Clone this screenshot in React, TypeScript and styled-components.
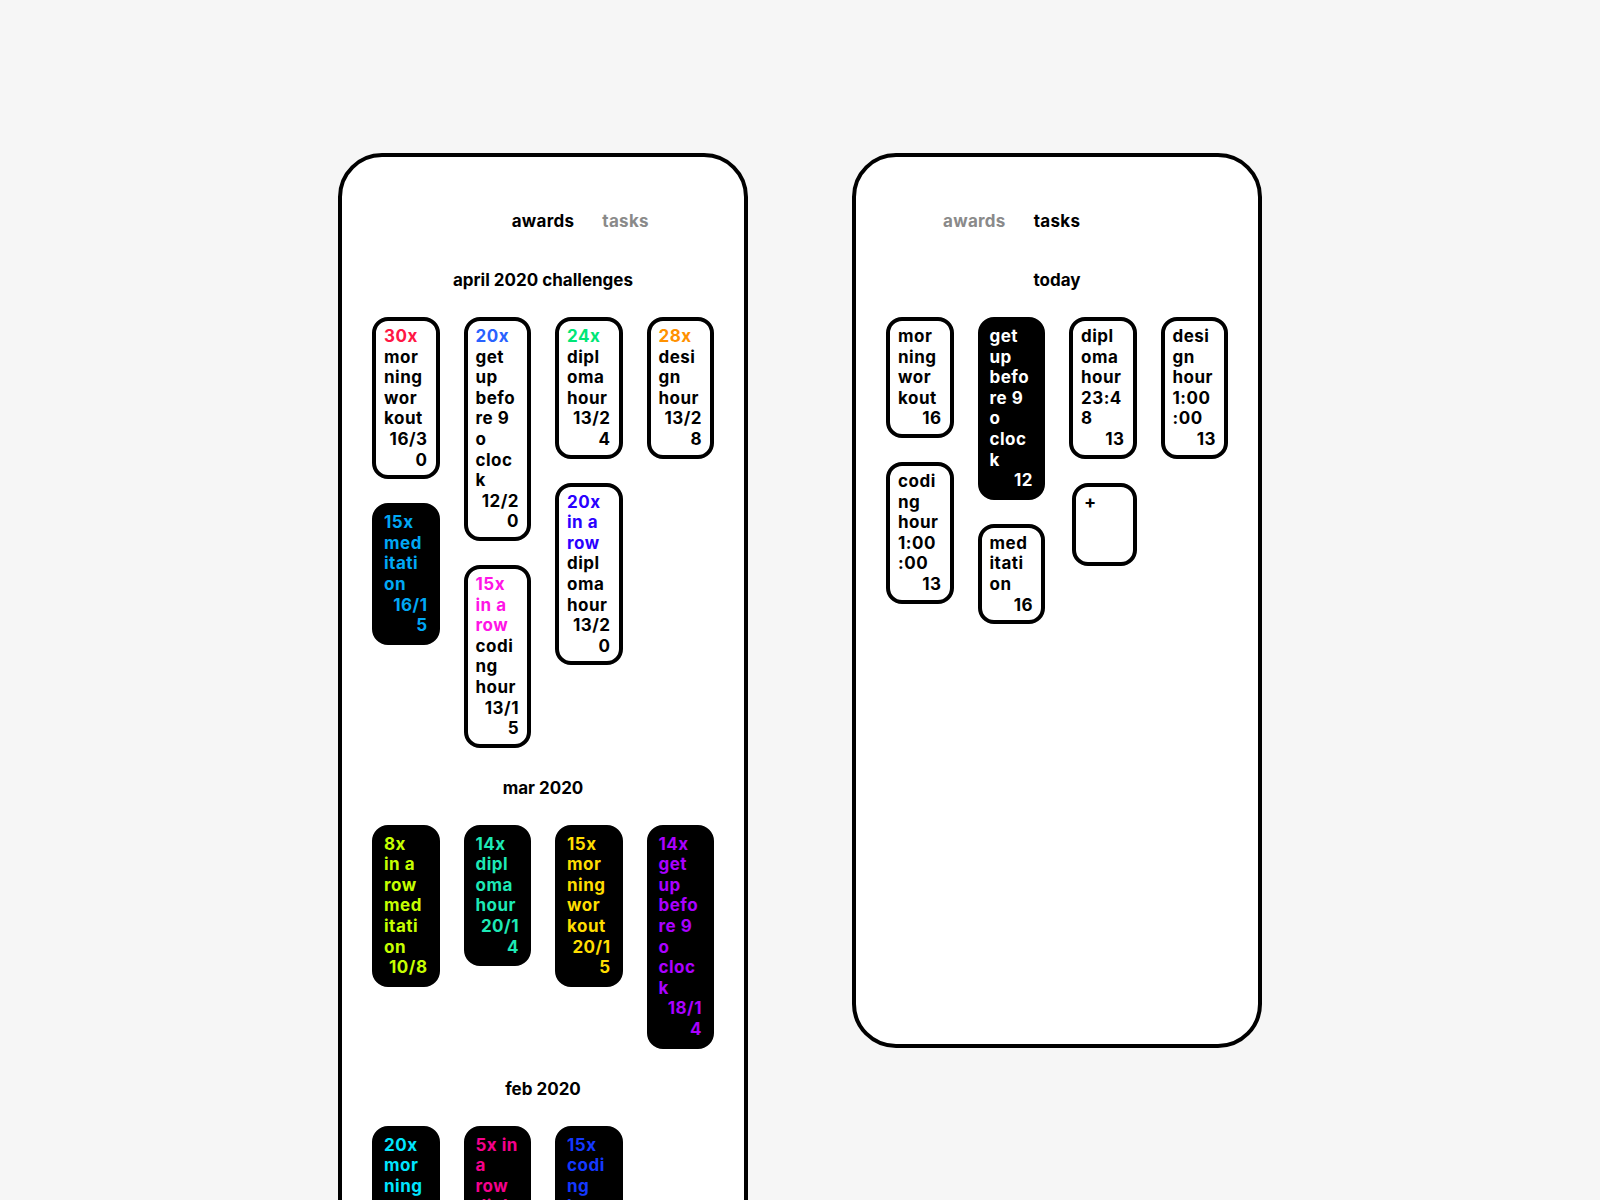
import React from 'react';
import styled, { createGlobalStyle, css } from 'styled-components';

const Global = createGlobalStyle`
  html, body { margin: 0; padding: 0; background: #f6f6f6; }
  body { font-family: Inter, "Noto Sans", "Liberation Sans", sans-serif; overflow: hidden; }
  #root { height: 1200px; }
`;

const Stage = styled.main`
  box-sizing: border-box;
  height: 1200px;
  overflow: hidden;
  display: flex;
  justify-content: center;
  align-items: flex-start;
  gap: 104px;
  padding-top: 153px;
`;

const Phone = styled.section<{ $fixed?: boolean }>`
  box-sizing: border-box;
  width: 410px;
  min-height: 895px;
  ${(p) => p.$fixed && css`height: 895px;`}
  background: #fff;
  border: 4px solid #000;
  border-radius: 44px;
  padding: 53px 30px 40px;
  display: flex;
  flex-direction: column;
  color: #000;
  font-weight: 650;
  font-size: 17px;
`;

const Tabs = styled.nav`
  display: grid;
  grid-template-columns: 1fr auto 1fr;
  column-gap: 28px;
  line-height: 22px;
  letter-spacing: 0.3px;
  margin-bottom: 37px;
`;

const Tab = styled.span<{ $active?: boolean; $align?: 'start' | 'end' }>`
  color: ${(p) => (p.$active ? '#000' : '#8a8a8a')};
  justify-self: ${(p) => p.$align ?? 'center'};
`;

const Section = styled.div`
  & + & { margin-top: 29px; }
`;

const SectionTitle = styled.h2`
  margin: 0 0 26px;
  text-align: center;
  font-size: 17px;
  font-weight: 650;
  line-height: 22px;
  letter-spacing: 0;
`;

const Board = styled.div`
  display: grid;
  grid-template-columns: repeat(4, minmax(0, 1fr));
  column-gap: 24px;
  align-items: start;
`;

const Column = styled.div`
  display: flex;
  flex-direction: column;
  gap: 24px;
  min-width: 0;
`;

const Card = styled.div<{ $dark?: boolean; $ink?: string }>`
  box-sizing: border-box;
  border: 4px solid #000;
  border-radius: 16px;
  padding: 5px 8px;
  background: ${(p) => (p.$dark ? '#000' : '#fff')};
  color: ${(p) => (p.$dark ? p.$ink ?? '#fff' : '#000')};
  line-height: 20.6px;
  letter-spacing: 0.5px;
  white-space: pre;
`;

const AddCard = styled(Card)`
  min-height: 83px;
  margin-left: 3px;
  font-size: 18px;
  font-weight: 700;
  cursor: pointer;
`;

const Award = styled.span<{ $color: string }>`
  display: block;
  color: ${(p) => p.$color};
`;

const Name = styled.span`
  display: block;
`;

const Count = styled.span`
  display: block;
  text-align: right;
`;

type Item = {
  award?: string;
  color?: string;
  name: string;
  count: string;
  dark?: boolean;
};

const april: Item[] = [
  { award: '30x', color: '#ff1744', name: 'mor\nning\nwor\nkout', count: '16/3\n0' },
  { award: '20x', color: '#2962ff', name: 'get\nup\nbefo\nre 9\no\ncloc\nk', count: '12/2\n0' },
  { award: '24x', color: '#00e676', name: 'dipl\noma\nhour', count: '13/2\n4' },
  { award: '28x', color: '#ff9100', name: 'desi\ngn\nhour', count: '13/2\n8' },
  { award: '15x', color: '#00a8f5', name: 'med\nitati\non', count: '16/1\n5', dark: true },
  { award: '15x\nin a\nrow', color: '#ff14e6', name: 'codi\nng\nhour', count: '13/1\n5' },
  { award: '20x\nin a\nrow', color: '#2a00ff', name: 'dipl\noma\nhour', count: '13/2\n0' },
];

const march: Item[] = [
  { award: '8x', color: '#c6ff00', name: 'in a\nrow\nmed\nitati\non', count: '10/8', dark: true },
  { award: '14x', color: '#1de9b6', name: 'dipl\noma\nhour', count: '20/1\n4', dark: true },
  { award: '15x', color: '#ffdd00', name: 'mor\nning\nwor\nkout', count: '20/1\n5', dark: true },
  { award: '14x', color: '#aa00ff', name: 'get\nup\nbefo\nre 9\no\ncloc\nk', count: '18/1\n4', dark: true },
];

const february: Item[] = [
  { award: '20x', color: '#00e5ff', name: 'mor\nning\nwor\nkout', count: '20/2\n0', dark: true },
  { award: '5x in\na\nrow', color: '#f5008c', name: 'dipl\noma\nhour', count: '5/5', dark: true },
  { award: '15x', color: '#1438ff', name: 'codi\nng\nhour', count: '15/1\n5', dark: true },
];

const today: Item[] = [
  { name: 'mor\nning\nwor\nkout', count: '16' },
  { name: 'get\nup\nbefo\nre 9\no\ncloc\nk', count: '12', dark: true },
  { name: 'dipl\noma\nhour\n23:4\n8', count: '13' },
  { name: 'desi\ngn\nhour\n1:00\n:00', count: '13' },
  { name: 'codi\nng\nhour\n1:00\n:00', count: '13' },
  { name: 'med\nitati\non', count: '16' },
];

function ItemCard({ item }: { item: Item }) {
  return (
    <Card $dark={item.dark} $ink={item.color}>
      {item.award && <Award $color={item.color ?? '#000'}>{item.award}</Award>}
      <Name>{item.name}</Name>
      <Count>{item.count}</Count>
    </Card>
  );
}

function Masonry({ items, withAdd }: { items: Item[]; withAdd?: boolean }) {
  const nodes: React.ReactNode[] = items.map((it, i) => <ItemCard key={i} item={it} />);
  if (withAdd) nodes.push(<AddCard key="add">+</AddCard>);
  const cols: React.ReactNode[][] = [[], [], [], []];
  nodes.forEach((n, i) => cols[i % 4].push(n));
  return (
    <Board>
      {cols.map((c, i) => (
        <Column key={i}>{c}</Column>
      ))}
    </Board>
  );
}

function TabBar({ active }: { active: 'awards' | 'tasks' }) {
  return active === 'awards' ? (
    <Tabs>
      <span />
      <Tab $active>awards</Tab>
      <Tab $align="start">tasks</Tab>
    </Tabs>
  ) : (
    <Tabs>
      <Tab $align="end">awards</Tab>
      <Tab $active>tasks</Tab>
      <span />
    </Tabs>
  );
}

export default function App() {
  return (
    <>
      <Global />
      <Stage>
        <Phone>
          <TabBar active="awards" />
          <Section>
            <SectionTitle>april 2020 challenges</SectionTitle>
            <Masonry items={april} />
          </Section>
          <Section>
            <SectionTitle>mar 2020</SectionTitle>
            <Masonry items={march} />
          </Section>
          <Section>
            <SectionTitle>feb 2020</SectionTitle>
            <Masonry items={february} />
          </Section>
        </Phone>
        <Phone $fixed>
          <TabBar active="tasks" />
          <Section>
            <SectionTitle>today</SectionTitle>
            <Masonry items={today} withAdd />
          </Section>
        </Phone>
      </Stage>
    </>
  );
}
